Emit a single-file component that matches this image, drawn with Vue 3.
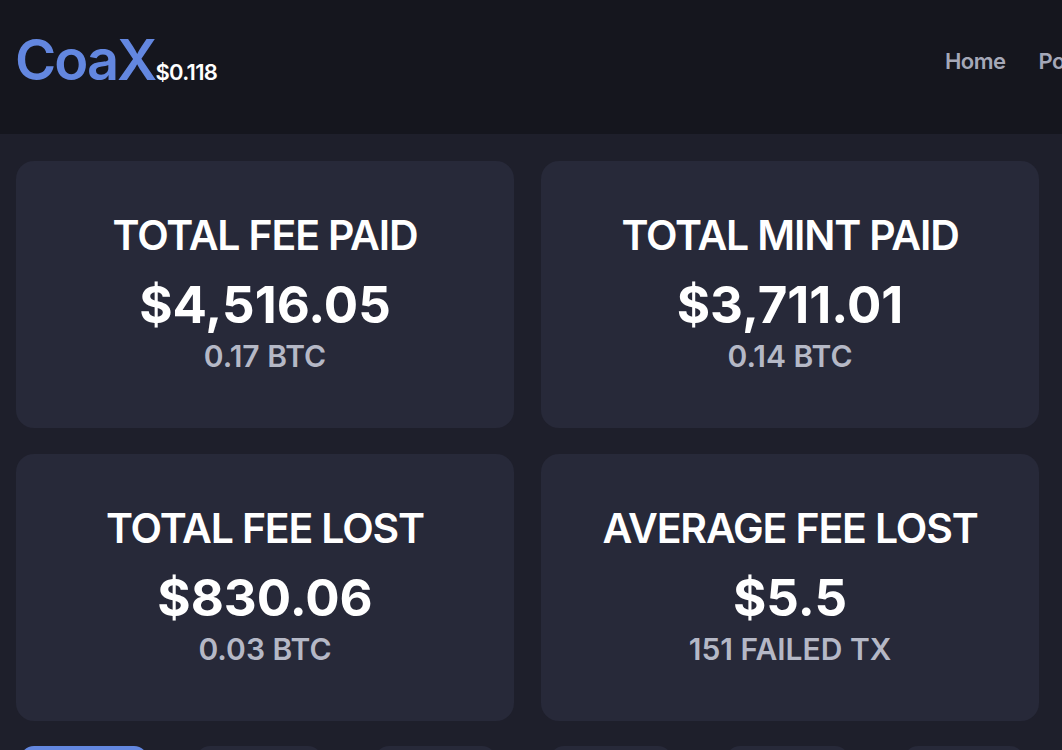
<script setup>
const cards = [
  { title: 'TOTAL FEE PAID', value: '$4,516.05', sub: '0.17 BTC' },
  { title: 'TOTAL MINT PAID', value: '$3,711.01', sub: '0.14 BTC' },
  { title: 'TOTAL FEE LOST', value: '$830.06', sub: '0.03 BTC' },
  { title: 'AVERAGE FEE LOST', value: '$5.5', sub: '151 FAILED TX' }
]
</script>

<template>
  <div class="page">
    <header class="top">
      <div class="brand"><span class="logo">CoaX</span><span class="price">$0.118</span></div>
      <nav class="nav"><span>Home</span><span>Portfolio</span></nav>
    </header>
    <main class="grid">
      <section v-for="c in cards" :key="c.title" class="card">
        <div class="title">{{ c.title }}</div>
        <div class="value">{{ c.value }}</div>
        <div class="sub">{{ c.sub }}</div>
      </section>
    </main>
    <div class="tabs">
      <span class="tab active"></span>
      <span class="tab t2"></span>
      <span class="tab t3"></span>
      <span class="tab t4"></span>
      <span class="tab t5"></span>
      <span class="tab t6"></span>
    </div>
  </div>
</template>

<style>
html, body { margin: 0; background: #1e1f2b; overflow: hidden; }
</style>
<style scoped>
.page { width: 1062px; height: 750px; overflow: hidden; background: #1e1f2b; font-family: Inter, "Liberation Sans", sans-serif; }
.top { height: 134px; box-sizing: border-box; background: #15161e; display: flex; justify-content: space-between; align-items: flex-start; padding: 0 0 0 15px; overflow: hidden; }
.brand { display: flex; align-items: baseline; padding-top: 29px; }
.logo { color: #6387e0; font-size: 56px; font-weight: 600; line-height: 62px; letter-spacing: -2px; }
.price { color: #fff; font-size: 22px; font-weight: 600; line-height: 30px; letter-spacing: -0.7px; }
.nav { display: flex; gap: 33px; color: #a5a8b8; font-size: 22px; font-weight: 600; white-space: nowrap; letter-spacing: -0.5px; line-height: 30px; padding-top: 46px; margin-right: -62px; }
.grid { display: grid; grid-template-columns: 498px 498px; gap: 26px 27px; padding: 27px 24px 0 16px; }
.card { height: 267px; box-sizing: border-box; background: #272939; border-radius: 18px; display: flex; flex-direction: column; align-items: center; padding-top: 51px; }
.title { color: #fff; font-size: 41px; font-weight: 600; line-height: 46px; letter-spacing: -1.15px; }
.value { color: #fff; font-size: 51px; font-weight: 700; line-height: 60px; margin-top: 17px; }
.sub { color: #b5b8c6; font-size: 30px; font-weight: 600; line-height: 40px; margin-top: 1px; }
.tabs { display: flex; gap: 50px; padding: 25px 0 0 20px; }
.tab { display: block; flex: none; width: 126px; height: 40px; background: #272939; border-radius: 14px; }
.tab.active { width: 128px; background: #6387e0; }
.tab.t2 { margin-left: -2px; }
.tab.t3 { width: 121px; margin-left: 3px; }
.tab.t4 { width: 122px; margin-left: 4px; }
.tab.t5 { width: 123px; margin-left: 4px; }
.tab.t6 { width: 120px; margin-left: 5px; }
</style>
